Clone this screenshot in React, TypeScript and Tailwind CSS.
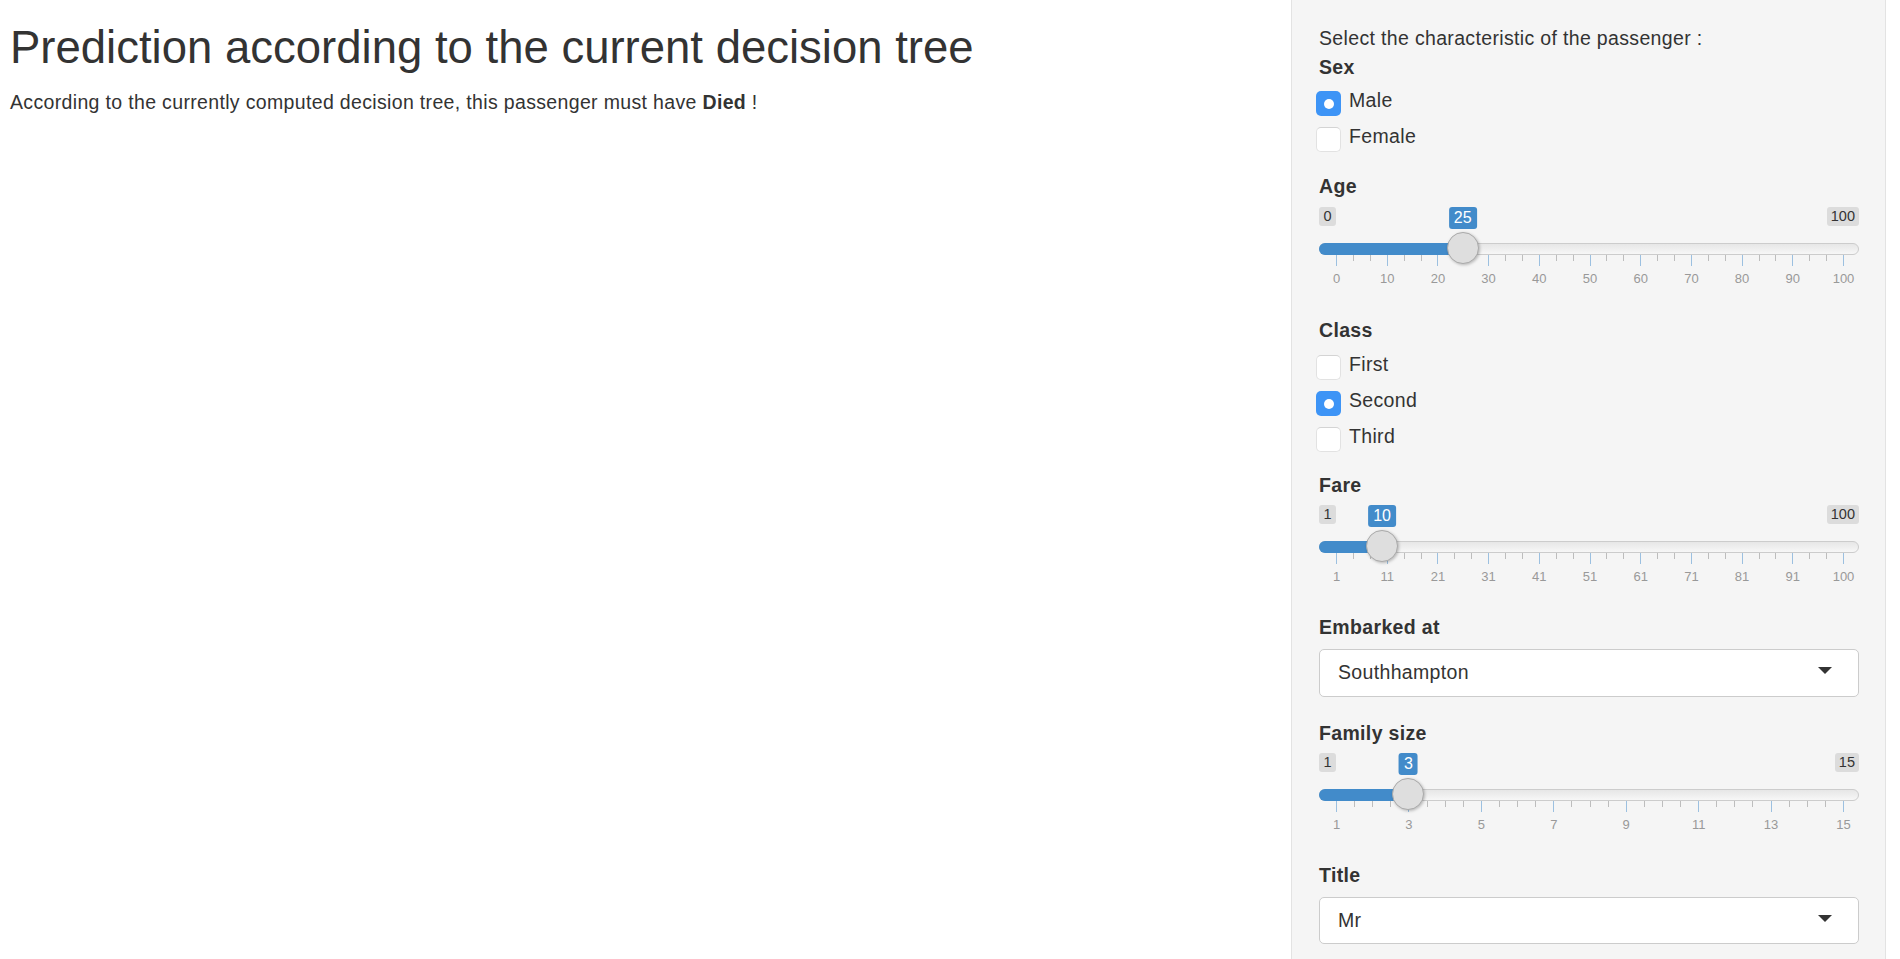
import React from "react";

// sizes measured off the screenshot (page is shown at 125% zoom)
const GRID_LEFT = 17;
const GRID_SPAN = 507;

const body = "text-[19.5px] leading-[25px] tracking-[0.34px]";

function Radio({ label, checked }: { label: string; checked?: boolean }) {
  return (
    <div className="flex h-[36px] items-center">
      {checked ? (
        <span className="ml-[-3px] mt-[5px] flex h-[25px] w-[25px] items-center justify-center rounded-[5px] bg-[#3d94f6]">
          <span className="mt-[2px] h-[10px] w-[10px] rounded-full bg-white" />
        </span>
      ) : (
        <span className="ml-[-3px] mt-[5px] h-[25px] w-[25px] rounded-[5px] border border-[#e2e2e2] border-t-[#d4d4d4] bg-white" />
      )}
      <span className={`ml-[8px] ${body}`}>{label}</span>
    </div>
  );
}

interface SliderProps {
  min: number;
  max: number;
  value: number;
  labels: string[];
  minors: number;
}

function Slider({ min, max, value, labels, minors }: SliderProps) {
  const x = GRID_LEFT + ((value - min) / (max - min)) * GRID_SPAN;
  const step = GRID_SPAN / (labels.length - 1);

  const ticks: { pos: number; major: boolean }[] = [];
  labels.forEach((_, i) => {
    ticks.push({ pos: GRID_LEFT + i * step, major: true });
    if (i < labels.length - 1) {
      for (let j = 1; j <= minors; j++) {
        ticks.push({ pos: GRID_LEFT + i * step + (j * step) / (minors + 1), major: false });
      }
    }
  });

  return (
    <div className="relative h-[84px]">
      <div className="flex justify-between">
        <span className="rounded-[3px] bg-[#dcdcdc] px-[4.5px] py-[1.25px] text-[14.5px] leading-[16.5px] text-[#333]">
          {min}
        </span>
        <span className="rounded-[3px] bg-[#dcdcdc] px-[4px] py-[1.25px] text-[14.5px] leading-[16.5px] text-[#333]">
          {max}
        </span>
      </div>
      <span
        className="absolute top-0 -translate-x-1/2 rounded-[3px] bg-[#428bca] px-[5px] py-[1.5px] text-[16px] leading-[19px] text-white"
        style={{ left: x }}
      >
        {value}
      </span>

      <div className="absolute left-0 right-0 top-[36px] h-[12px] rounded-full border border-[#cccccc] bg-[linear-gradient(to_bottom,#dedede_-50%,#ffffff_150%)]" />
      <div
        className="absolute left-0 top-[36px] h-[12px] rounded-l-full bg-[#428bca]"
        style={{ width: x }}
      />

      {ticks.map((t, i) => (
        <span
          key={i}
          className={
            t.major
              ? "absolute top-[48px] h-[11px] w-px bg-[#9cc0e0]"
              : "absolute top-[48px] h-[6px] w-px bg-[#bdbdbd]"
          }
          style={{ left: t.pos }}
        />
      ))}
      {labels.map((l, i) => (
        <span
          key={l}
          className="absolute top-[65px] -translate-x-1/2 text-[13px] leading-[14px] text-[#999]"
          style={{ left: GRID_LEFT + i * step + 0.5 }}
        >
          {l}
        </span>
      ))}

      <div
        className="absolute top-[25px] h-[32px] w-[32px] -translate-x-1/2 rounded-full border border-[#aaaaaa] bg-[#dedede] shadow-[1px_1px_3px_rgba(0,0,0,0.25)]"
        style={{ left: x }}
      />
    </div>
  );
}

function Select({ value, height }: { value: string; height: string }) {
  return (
    <div
      className={`flex items-center justify-between rounded-[5px] border border-[#cccccc] bg-white pl-[18px] pr-[26px] ${height}`}
    >
      <span className={body}>{value}</span>
      <span className="mb-[4px] h-0 w-0 border-x-[7px] border-t-[7px] border-x-transparent border-t-[#333]" />
    </div>
  );
}

export default function App() {
  return (
    <div className="flex h-screen overflow-hidden bg-white font-['Liberation_Sans',Arial,sans-serif] text-[#333]">
      <main className="flex-1 pl-[10px]">
        <h1 className="mt-[23px] text-[45.5px] font-normal leading-[49.5px]">
          Prediction according to the current decision tree
        </h1>
        <p className={`mt-[17px] ${body}`}>
          According to the currently computed decision tree, this passenger must have{" "}
          <b>Died</b> !
        </p>
      </main>

      <aside className="mr-[14px] w-[595px] border-x border-[#e3e3e3] bg-[#f5f5f5] pl-[27px] pr-[26px] pt-[26px]">
        <p className={body}>Select the characteristic of the passenger :</p>

        <div className={`mt-[4px] font-bold ${body}`}>Sex</div>
        <div className="mt-[2.5px]">
          <Radio label="Male" checked />
          <Radio label="Female" />
        </div>

        <div className={`mt-[19.5px] font-bold ${body}`}>Age</div>
        <div className="mt-[7.5px]">
          <Slider
            min={0}
            max={100}
            value={25}
            minors={2}
            labels={["0", "10", "20", "30", "40", "50", "60", "70", "80", "90", "100"]}
          />
        </div>

        <div className={`mt-[27.5px] font-bold ${body}`}>Class</div>
        <div className="mt-[3.5px]">
          <Radio label="First" />
          <Radio label="Second" checked />
          <Radio label="Third" />
        </div>

        <div className={`mt-[18.5px] font-bold ${body}`}>Fare</div>
        <div className="mt-[6.5px]">
          <Slider
            min={1}
            max={100}
            value={10}
            minors={2}
            labels={["1", "11", "21", "31", "41", "51", "61", "71", "81", "91", "100"]}
          />
        </div>

        <div className={`mt-[26.5px] font-bold ${body}`}>Embarked at</div>
        <div className="mt-[8.5px]">
          <Select value="Southhampton" height="h-[48px]" />
        </div>

        <div className={`mt-[24.5px] font-bold ${body}`}>Family size</div>
        <div className="mt-[6.5px]">
          <Slider
            min={1}
            max={15}
            value={3}
            minors={3}
            labels={["1", "3", "5", "7", "9", "11", "13", "15"]}
          />
        </div>

        <div className={`mt-[26.5px] font-bold ${body}`}>Title</div>
        <div className="mt-[8.5px]">
          <Select value="Mr" height="h-[47px]" />
        </div>
      </aside>
    </div>
  );
}
